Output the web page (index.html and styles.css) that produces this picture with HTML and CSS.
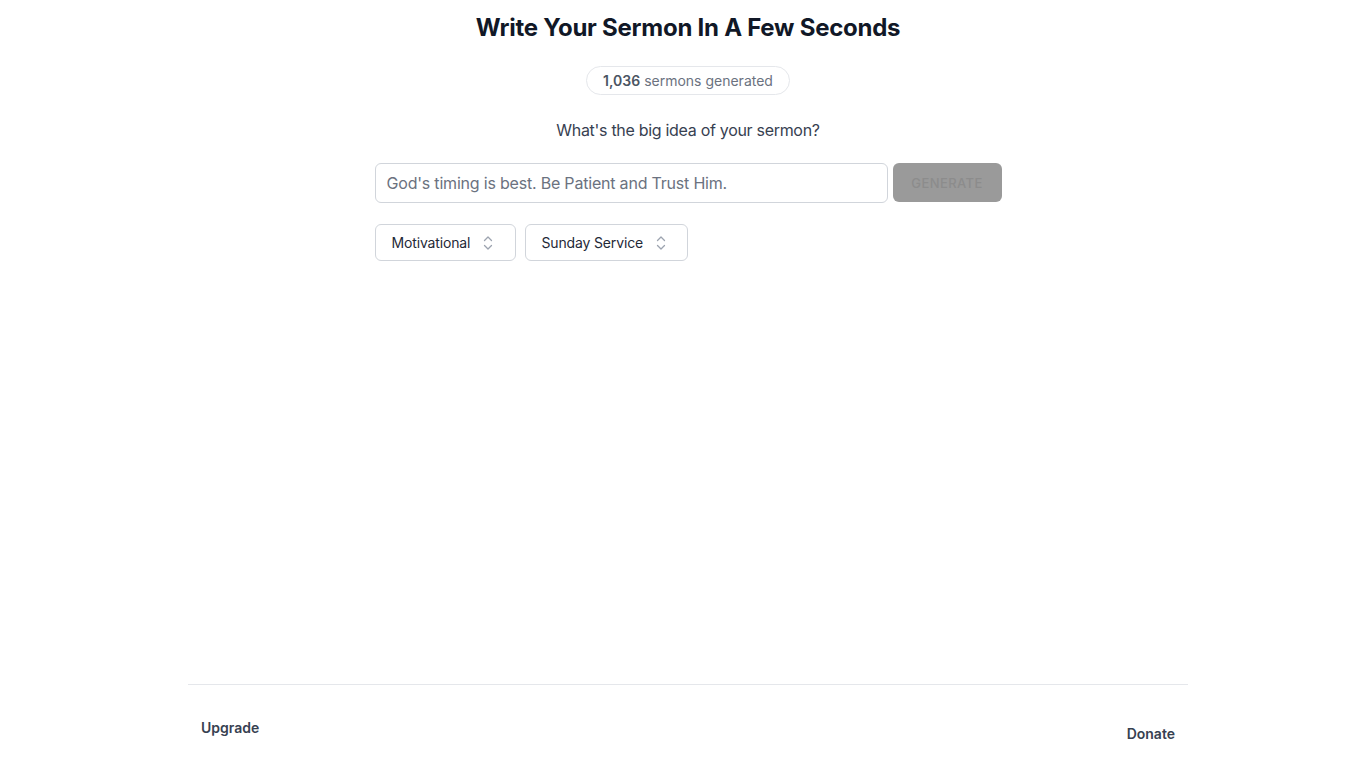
FILE: index.html
```html
<!DOCTYPE html>
<html lang="en">
<head>
<meta charset="utf-8">
<title>Sermon Writer</title>
<link rel="stylesheet" href="styles.css">
</head>
<body>
<div class="page">
  <main class="main">
    <h1 class="title">Write Your Sermon In A Few Seconds</h1>
    <div class="badge"><b>1,036</b> sermons generated</div>
    <p class="question">What's the big idea of your sermon?</p>
    <div class="form">
      <div class="row">
        <input class="idea" type="text" placeholder="God's timing is best. Be Patient and Trust Him.">
        <button class="generate" disabled>GENERATE</button>
      </div>
      <div class="selects">
        <div class="select sel-a">
          <span>Motivational</span>
          <svg class="chev" width="12" height="16" viewBox="0 0 12 16" fill="none" stroke="#9ca3af" stroke-width="1.3" stroke-linecap="round" stroke-linejoin="round"><path d="M2.5 5.5 6 2l3.5 3.5"/><path d="M2.5 10.5 6 14l3.5-3.5"/></svg>
        </div>
        <div class="select sel-b">
          <span>Sunday Service</span>
          <svg class="chev" width="12" height="16" viewBox="0 0 12 16" fill="none" stroke="#9ca3af" stroke-width="1.3" stroke-linecap="round" stroke-linejoin="round"><path d="M2.5 5.5 6 2l3.5 3.5"/><path d="M2.5 10.5 6 14l3.5-3.5"/></svg>
        </div>
      </div>
    </div>
  </main>
  <footer class="footer">
    <a class="flink up">Upgrade</a>
    <a class="flink down">Donate</a>
  </footer>
</div>
</body>
</html>
```
FILE: styles.css
```css
* { box-sizing: border-box; }
html, body { margin: 0; padding: 0; background: #fff; }
body {
  font-family: Inter, "Noto Sans", "Liberation Sans", sans-serif;
  color: #111827;
  padding-left: 16px;
}
.page {
  width: 1000px;
  margin: 0 auto;
  height: 764px;
  display: flex;
  flex-direction: column;
}
.main {
  flex: 1;
  display: flex;
  flex-direction: column;
  align-items: center;
  padding-top: 12px;
}
.title {
  margin: 0;
  font-size: 24px;
  line-height: 32px;
  font-weight: 700;
  color: #111827;
  letter-spacing: -0.25px;
}
.badge {
  margin-top: 22px;
  height: 29px;
  padding: 0 16px;
  border: 1px solid #e5e7eb;
  border-radius: 15px;
  display: flex;
  align-items: center;
  font-size: 14px;
  color: #6b7280;
}
.badge b { font-weight: 600; color: #4b5563; margin-right: 4px; }
.question {
  margin: 23px 0 0;
  font-size: 16px;
  line-height: 24px;
  letter-spacing: -0.3px;
  color: #374151;
}
.form {
  margin-top: 21px;
  width: 627px;
  display: flex;
  flex-direction: column;
  gap: 21px;
}
.row { display: flex; gap: 5px; }
.idea {
  flex: 1;
  height: 40px;
  border: 1px solid #d1d5db;
  border-radius: 6px;
  padding: 0 11px;
  font-family: inherit;
  font-size: 16px;
  letter-spacing: -0.2px;
  color: #111827;
  outline: none;
}
.idea::placeholder { color: #6b7280; }
.generate {
  width: 109px;
  height: 39px;
  border: none;
  border-radius: 6px;
  background: #9a9a9a;
  color: #8c8c8c;
  font-family: inherit;
  font-size: 13px;
  font-weight: 500;
  letter-spacing: 0.4px;
}
.selects { display: flex; gap: 9px; }
.select {
  height: 37px;
  border: 1px solid #d1d5db;
  border-radius: 6px;
  display: flex;
  align-items: center;
  padding: 0 0 0 16px;
  font-size: 14px;
  letter-spacing: -0.15px;
  color: #1f2937;
}
.sel-a { width: 141px; }
.sel-b { width: 163px; }
.chev { margin-left: 12px; }
.footer {
  border-top: 1px solid #e5e7eb;
  height: 80px;
  display: flex;
  justify-content: space-between;
  padding: 0 13px;
}
.flink {
  font-size: 14px;
  font-weight: 600;
  color: #374151;
  line-height: 20px;
}
.up { margin-top: 33px; }
.down { margin-top: 39px; }
```
